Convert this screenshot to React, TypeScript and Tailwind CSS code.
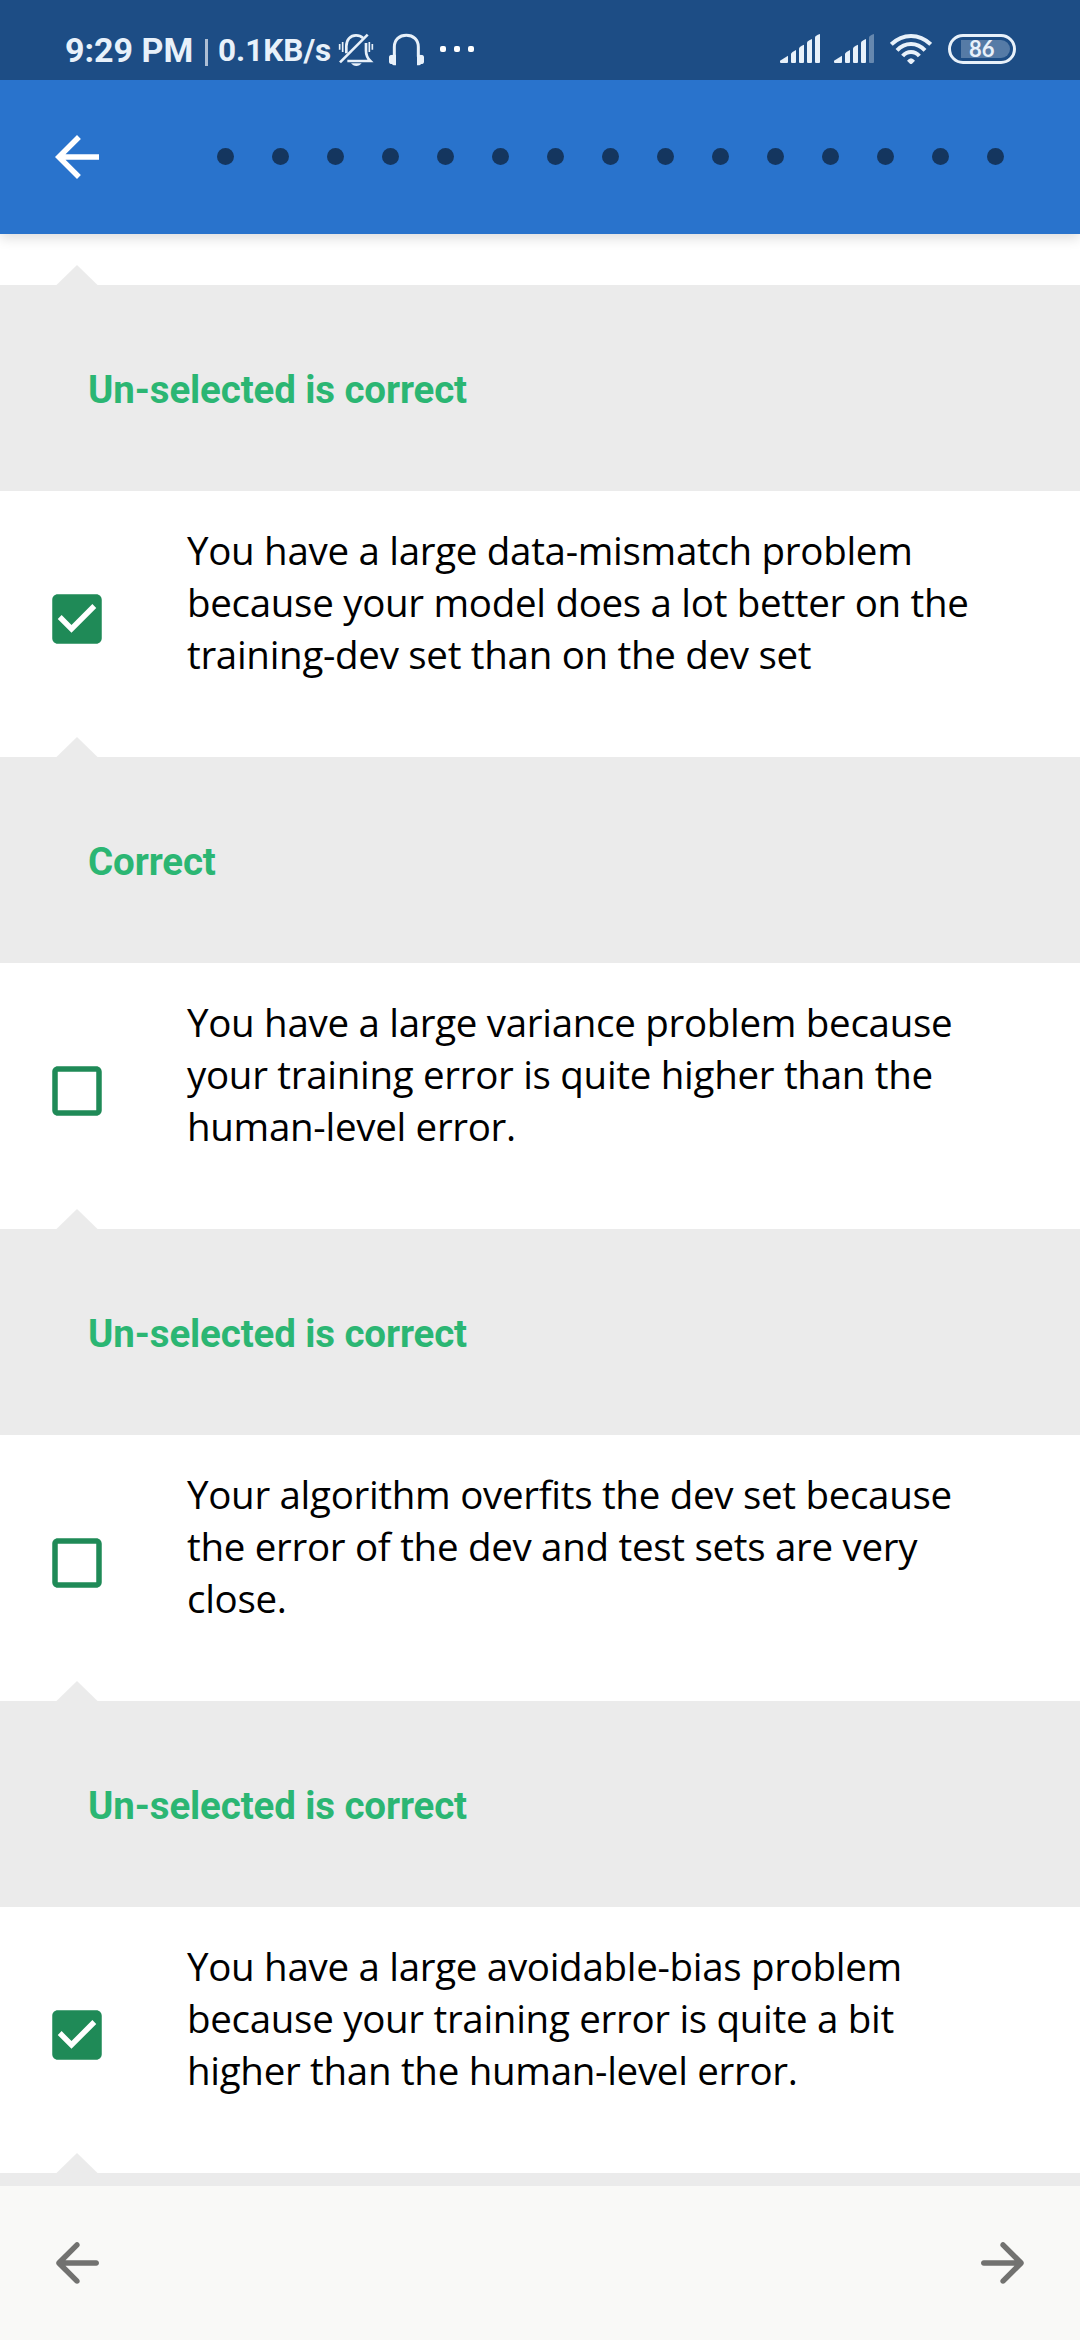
import React from 'react';

const answers = [
  {
    lines: ['You have a large data-mismatch problem', 'because your model does a lot better on the', 'training-dev set than on the dev set'],
    checked: true,
    feedback: 'Correct',
  },
  {
    lines: ['You have a large variance problem because', 'your training error is quite higher than the', 'human-level error.'],
    checked: false,
    feedback: 'Un-selected is correct',
  },
  {
    lines: ['Your algorithm overfits the dev set because', 'the error of the dev and test sets are very', 'close.'],
    checked: false,
    feedback: 'Un-selected is correct',
  },
  {
    lines: ['You have a large avoidable-bias problem', 'because your training error is quite a bit', 'higher than the human-level error.'],
    checked: true,
    feedback: '',
  },
];

function BellOff() {
  return (
    <svg className="ml-[7px] mt-[32px] h-[35px] w-9 shrink-0" viewBox="54 66 108 105" fill="none" stroke="currentColor">
      <path d="M79 130V109C79 89 91 76 108 76C117 76 124 79 129 84" strokeWidth="8" />
      <path d="M138 99V122C138 137 144 146 151 153H82" strokeWidth="8" />
      <path d="M60 157L143 74" strokeWidth="8" />
      <path d="M59 102V119M68 96V126M148 96V126M157 102V119" strokeWidth="5" />
      <path d="M93 160H125C121 165 116 168 109 168S97 165 93 160Z" fill="currentColor" stroke="none" />
    </svg>
  );
}

function Headphones() {
  return (
    <svg className="ml-[14px] mt-[33px] h-[33px] w-[37px] shrink-0" viewBox="204 69 111 99" fill="none">
      <path d="M223 140V111C223 89 238 76 259 76S295 89 295 111V140" stroke="currentColor" strokeWidth="9" />
      <path d="M228 134V166H222Q218 166 216 162H212Q207 161 207 156V141Q207 136 212 135ZM291 134V166H297Q301 166 303 162H307Q312 161 312 156V141Q312 136 307 135Z" fill="currentColor" />
    </svg>
  );
}

function Signal({ weak = false, className }: { weak?: boolean; className: string }) {
  return (
    <svg className={`mt-[34px] h-[29px] w-10 shrink-0 ${className}`} viewBox="0 0 120 87" fill="currentColor">
      <path d="M0 80L24 65V84Q24 87 21 87H3Q0 87 0 84Z" />
      <path d="M33 60Q33 56 48 48V84Q48 87 45 87H36Q33 87 33 84Z" />
      <path d="M57 43Q57 39 72 32V84Q72 87 69 87H60Q57 87 57 84Z" />
      <path d="M81 26Q81 21 96 15V84Q96 87 93 87H84Q81 87 81 84Z" />
      <path d="M105 10Q105 5 120 0V84Q120 87 117 87H108Q105 87 105 84Z" opacity={weak ? 0.36 : 1} />
    </svg>
  );
}

function Wifi() {
  return (
    <svg className="ml-4 mt-[33px] h-[31px] w-[42px] shrink-0" viewBox="390 69 126 93" fill="none" stroke="currentColor" strokeWidth="12">
      <path d="M394 103Q420 78 453 78T512 103" />
      <path d="M411 121Q429 102 453 102T495 121" />
      <path d="M428 138Q438 126 453 126T478 138" />
      <path d="M441 152Q453 137 465 152L456 161Q453 163 450 161Z" fill="currentColor" stroke="none" />
    </svg>
  );
}

function StatusBar() {
  return (
    <div className="relative z-20 flex h-20 shrink-0 items-start bg-[#1d4d85] font-['Roboto'] text-[#e8f1fa]">
      <div className="ml-[65px] mt-[30px] w-[129px] whitespace-nowrap text-[34px] font-bold leading-10">9:29 PM</div>
      <div className="ml-[11px] mt-[39px] h-[27px] w-[3px] bg-[#aebfd5]" />
      <div className="ml-[10px] mt-[31px] w-[113px] whitespace-nowrap text-[31.5px] font-bold leading-10">0.1KB/s</div>
      <BellOff />
      <Headphones />
      <div className="ml-[15px] mt-[46px] flex gap-2 text-white">
        <i className="size-1.5 rounded-xs bg-white" />
        <i className="size-1.5 rounded-xs bg-white" />
        <i className="size-1.5 rounded-xs bg-white" />
      </div>
      <Signal className="ml-auto" />
      <Signal weak className="ml-[14px]" />
      <Wifi />
      <div className="ml-4 mr-16 mt-[34px] flex h-[30px] w-[68px] rounded-full border-[3px] border-[#e8f1fa] p-[3px]">
        <div className="ml-[7px] flex w-[49px] items-center rounded-r-full rounded-l-xs bg-[#567ba6] pl-2 font-['Lato'] text-[22px] font-bold leading-none">86</div>
      </div>
    </div>
  );
}

function Feedback({ text }: { text: string }) {
  return (
    <div className="relative h-[206px] shrink-0 bg-[#ebebeb] pl-[88px] pt-[82px]">
      <svg className="absolute -top-5 left-[56px] h-5 w-[42px]" viewBox="0 0 42 20">
        <path d="M.5 20L21 0L41.500 20Z" fill="#ebebeb" />
      </svg>
      <p className="whitespace-nowrap font-['Roboto'] text-[38.5px] font-bold leading-[45px] tracking-[-0.13px] text-[#2bb673]">{text}</p>
    </div>
  );
}

function Checkbox({ checked }: { checked: boolean }) {
  return (
    <svg className="ml-11 mt-[95px] size-[66px] shrink-0" viewBox="0 0 24 24" fill="#1f8a57">
      {checked ? (
        <path d="M19 3H5c-1.110 0-2 .9-2 2v14c0 1.100.89 2 2 2h14c1.110 0 2-.9 2-2V5c0-1.100-.89-2-2-2zm-9 14l-5-5 1.410-1.410L10 14.170l7.590-7.590L19 8l-9 9z" />
      ) : (
        <path d="M19 5v14H5V5h14m0-2H5c-1.100 0-2 .9-2 2v14c0 1.100.9 2 2 2h14c1.100 0 2-.9 2-2V5c0-1.100-.9-2-2-2z" />
      )}
    </svg>
  );
}

function RoundArrow({ className }: { className: string }) {
  return (
    <svg className={`size-[66px] ${className}`} viewBox="0 0 24 24" fill="#727270">
      <path d="M19 11H7.830l4.880-4.880c.39-.39.39-1.030 0-1.420-.39-.39-1.020-.39-1.410 0l-6.590 6.590c-.39.39-.39 1.020 0 1.410l6.590 6.590c.39.39 1.020.39 1.410 0 .39-.39.39-1.020 0-1.410L7.830 13H19c.55 0 1-.45 1-1s-.45-1-1-1z" />
    </svg>
  );
}

export default function App() {
  return (
    <div className="flex h-[2340px] w-[1080px] flex-col overflow-hidden bg-white">
      <StatusBar />
      <header className="z-10 flex h-[154px] shrink-0 items-center bg-[#2973cc] shadow-[0_4px_12px_rgba(0,0,0,0.14)]">
        <svg className="ml-11 size-[66px]" viewBox="0 0 24 24" fill="white">
          <path d="M20 11H7.830l5.590-5.590L12 4l-8 8 8 8 1.410-1.410L7.830 13H20v-2z" />
        </svg>
        <div className="-mt-px ml-[107px] flex gap-[38px]">
          {Array.from({ length: 15 }, (_, i) => (
            <i key={i} className="size-[17px] rounded-full bg-[#14365f]" />
          ))}
        </div>
      </header>
      <main className="flex min-h-0 grow flex-col overflow-hidden pt-[51px]">
        <Feedback text="Un-selected is correct" />
        {answers.map((a, i) => (
          <React.Fragment key={i}>
            <div className="flex h-[266px] shrink-0 items-start">
              <Checkbox checked={a.checked} />
              <p className="ml-[77px] mt-[33px] whitespace-nowrap font-['Open_Sans'] text-[38.5px] font-normal leading-[52px] tracking-[-0.3px] text-black">
                {a.lines.map((line) => (
                  <span key={line} className="block">{line}</span>
                ))}
              </p>
            </div>
            <Feedback text={a.feedback} />
          </React.Fragment>
        ))}
      </main>
      <footer className="flex h-[154px] shrink-0 items-center justify-between bg-[#f9f9f7] px-11">
        <RoundArrow className="" />
        <RoundArrow className="-scale-x-100" />
      </footer>
    </div>
  );
}
